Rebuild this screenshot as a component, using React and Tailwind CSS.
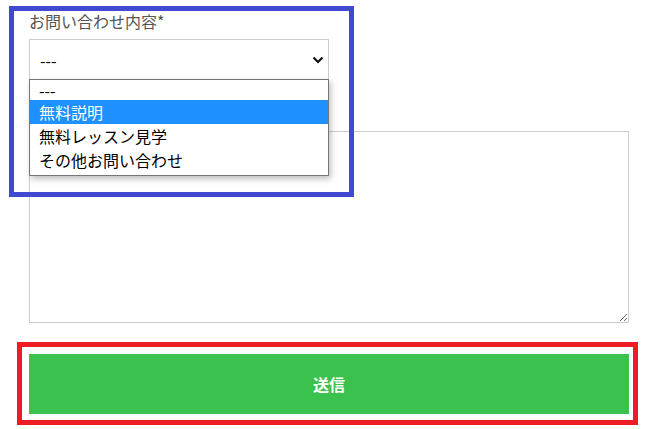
import React from "react";

const options = ["---", "無料説明", "無料レッスン見学", "その他お問い合わせ"];

function Chevron() {
  return (
    <svg width="12" height="8" viewBox="0 0 12 8" className="block">
      <path d="M1.5 1.5 L6 6 L10.5 1.5" fill="none" stroke="#111" strokeWidth="2.2" />
    </svg>
  );
}

export default function App() {
  const font = { fontFamily: '"Noto Sans CJK JP", "Noto Sans", sans-serif' };

  return (
    <div className="relative w-[656px] h-[429px] bg-white overflow-hidden" style={font}>
      <div className="pl-[29px] pt-[9px] w-[629px] flex flex-col">
        {/* label */}
        <label className="text-[16px] leading-[24px] text-[#555]">お問い合わせ内容*</label>

        {/* select + open list */}
        <div className="relative mt-[6px] w-[300px]">
          <div className="h-[41px] border border-[#ccc] bg-white flex items-center justify-between pl-[10px] pr-[4px] text-[16px] text-black">
            <span>---</span>
            <Chevron />
          </div>
          <ul className="absolute left-0 top-[40px] w-[300px] bg-white border border-[#767676] shadow-[2px_3px_6px_rgba(0,0,0,0.25)] z-10 text-[16px] text-black pb-[3px]">
            {options.map((o, i) => (
              <li
                key={o}
                className={
                  (i === 0 ? "h-[20px] leading-[20px] " : "h-[24px] leading-[24px] ") +
                  (i === 1 ? "bg-[#1e90ff] text-white " : "") +
                  "pl-[9px]"
                }
              >
                {o}
              </li>
            ))}
          </ul>
        </div>

        {/* message */}
        <textarea
          readOnly
          className="mt-[51px] w-[600px] h-[192px] border border-[#ccc] bg-white outline-none block"
        />

        {/* submit */}
        <button className="mt-[31px] w-[600px] h-[60px] bg-[#3bc14e] text-white font-bold text-[16px]">
          送信
        </button>
      </div>

      {/* annotation boxes */}
      <div className="absolute left-[9px] top-[6px] w-[345px] h-[191px] border-[5px] border-[#4049cf] pointer-events-none" />
      <div className="absolute left-[17px] top-[342px] w-[621px] h-[83px] border-[5px] border-[#ee1c25] pointer-events-none" />
    </div>
  );
}
